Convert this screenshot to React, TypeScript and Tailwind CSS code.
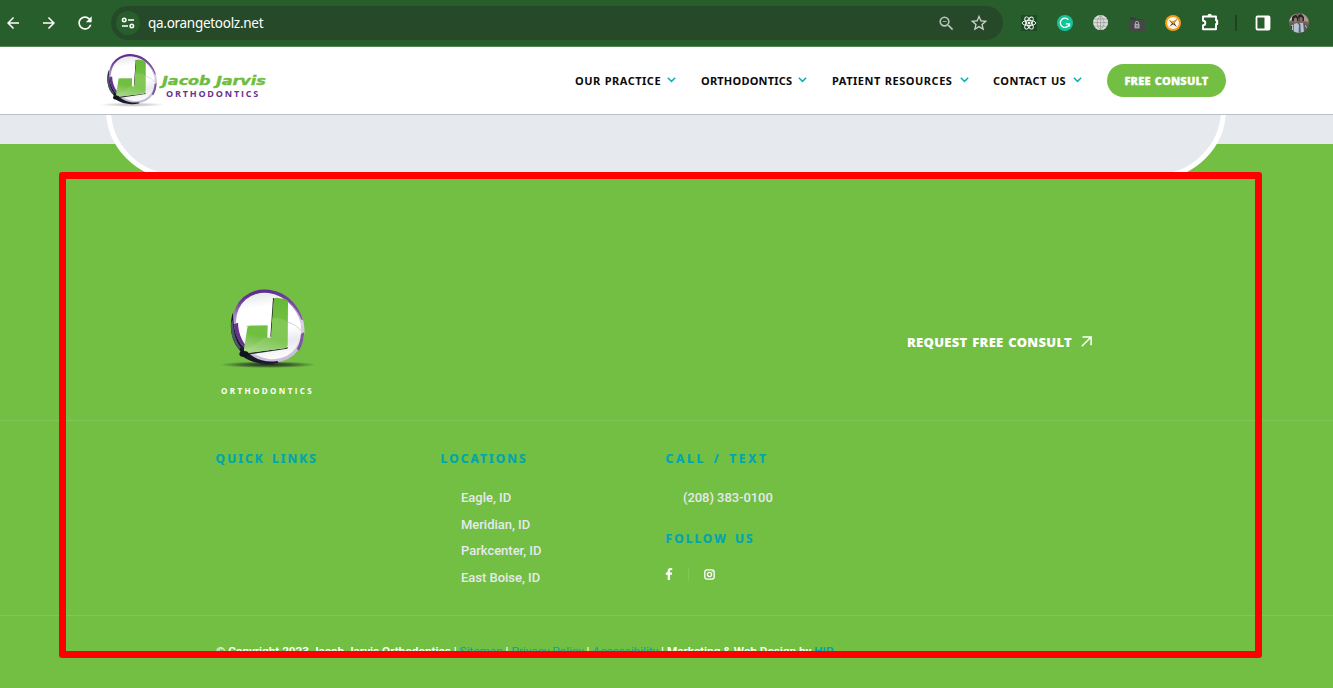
import React from "react";
import { MdArrowBack, MdArrowForward, MdRefresh, MdStarBorder, MdOutlineZoomOut } from "react-icons/md";
import { FaFacebookF } from "react-icons/fa";

function Emblem({ id, className, shadow }: { id: string; className: string; shadow: number }) {
  return (
    <svg viewBox="60 55 285 240" className={className}>
      <defs>
        <linearGradient id={`${id}-ring`} gradientUnits="userSpaceOnUse" x1="180" y1="60" x2="215" y2="282" gradientTransform="rotate(-49 206 169)">
          <stop offset="0" stopColor="#5c2a88" />
          <stop offset="0.12" stopColor="#6f3b9b" />
          <stop offset="0.3" stopColor="#a78ac2" />
          <stop offset="0.5" stopColor="#d9cfe4" />
          <stop offset="1" stopColor="#c9bad9" />
        </linearGradient>
        <linearGradient id={`${id}-face`} gradientUnits="userSpaceOnUse" x1="190" y1="70" x2="220" y2="272" gradientTransform="rotate(-49 206 169)">
          <stop offset="0" stopColor="#e9e9ec" />
          <stop offset="0.2" stopColor="#ffffff" />
          <stop offset="0.55" stopColor="#ffffff" />
          <stop offset="0.75" stopColor="#e9eaee" />
          <stop offset="1" stopColor="#ffffff" />
        </linearGradient>
        <linearGradient id={`${id}-j`} x1="0.6" y1="0" x2="0.4" y2="1">
          <stop offset="0" stopColor="#68b93a" />
          <stop offset="0.45" stopColor="#72c142" />
          <stop offset="0.7" stopColor="#6fbe3f" />
          <stop offset="1" stopColor="#9fd37f" />
        </linearGradient>
        <radialGradient id={`${id}-shadow`}>
          <stop offset="0" stopColor="#1c251c" stopOpacity="0.95" />
          <stop offset="0.5" stopColor="#1c251c" stopOpacity="0.6" />
          <stop offset="1" stopColor="#1c251c" stopOpacity="0" />
        </radialGradient>
      </defs>
      <ellipse cx="204" cy="285" rx="145" ry="10" fill={`url(#${id}-shadow)`} opacity={shadow} />
      <ellipse cx="206" cy="169" rx="115" ry="102" transform="rotate(49 206 169)" fill={`url(#${id}-ring)`} />
      <ellipse cx="206" cy="169" rx="105" ry="92" transform="rotate(49 206 169)" fill={`url(#${id}-face)`} />
      <path d="M99 128C86 166 93 214 118 240L130 262C158 280 194 288 236 279L232 274C196 280 165 268 146 250L134 236C110 212 100 180 99 128Z" fill="#171b29" />
      <path d="M93 160C91 190 99 220 117 238L123 234C107 212 100 190 99 150Z" fill="#4a5866" />
      <path d="M102 164L114 159C115 188 124 211 139 229L134 236C113 215 103 190 102 164Z" fill="#67328f" />
      <path d="M303 193L312 188C312 209 306 229 297 243L290 238C298 224 302 209 303 193Z" fill="#7d55a0" />
      <path d="M232 66C268 78 298 112 309 150L304 150C293 120 267 88 231 73Z" fill="#6b3c92" opacity="0.75" />
      <path d="M211 201L214 201L223 86L219 85Z" fill="#1d281e" />
      <path d="M140 170L203 168" stroke="#4d7f36" strokeWidth="1.5" />
      <path d="M134 250L254 236L264 232L262 237L150 254Z" fill="#26342a" />
      <path d="M221 91Q222 83 230 84L254 88Q264 90 264 99L263 225Q263 233 254 235L145 250Q130 250 132 237L142 174Q143 168 150 168L203 168L202 204L213 204Z" fill={`url(#${id}-j)`} />
      <path d="M217 146Q247 142 264 158L263 225Q263 233 254 235L145 250Q132 249 133 237Q165 229 192 204L214 204Z" fill="#b9e2a0" opacity="0.22" />
      <path d="M264 157Q291 166 308 188" stroke="#d4d0dc" strokeWidth="3" fill="none" />
      <ellipse cx="132" cy="253" rx="14" ry="9" fill="#10151d" />
    </svg>
  );
}

function Chevron() {
  return (
    <svg viewBox="0 0 9 6" className="mt-[-1px] h-[6px] w-[9px] shrink-0">
      <path d="M0.8 0.8L4.5 4.4L8.2 0.8" fill="none" stroke="#0cb0b8" strokeWidth="1.5" />
    </svg>
  );
}

function NavItem({ label, className }: { label: string; className: string }) {
  return (
    <a className={`flex shrink-0 items-center justify-between ${className}`}>
      <span className="whitespace-nowrap pt-[2px] font-['Noto_Sans',sans-serif] text-[11px] font-bold text-[#0b0b0b]">{label}</span>
      <Chevron />
    </a>
  );
}

function BrowserBar() {
  return (
    <div className="relative z-10 flex h-[47px] shrink-0 items-center border-b border-[#558558] bg-[#285e2b] text-white">
      <MdArrowBack className="ml-[4px] size-[18px]" />
      <MdArrowForward className="ml-[18px] size-[18px]" />
      <MdRefresh className="ml-[17px] size-[20px]" />
      <div className="ml-[16px] flex h-[34px] w-[892px] items-center rounded-full bg-[#264a29] pl-[5px]">
        <div className="flex size-[24px] items-center justify-center rounded-full bg-[#285e2b]">
          <svg viewBox="0 0 14 12" className="h-[12px] w-[14px]" fill="none" stroke="#fff" strokeWidth="1.6">
            <circle cx="3.2" cy="3" r="1.7" />
            <path d="M7 3H13M1 9H7" />
            <circle cx="10.8" cy="9" r="1.7" />
          </svg>
        </div>
        <span className="ml-[8px] font-['Noto_Sans',sans-serif] text-[13.5px] tracking-[-0.28px]">qa.orangetoolz.net</span>
        <MdOutlineZoomOut className="ml-auto size-[19px] text-[#b9c2b9]" />
        <MdStarBorder className="ml-[13px] mr-[14px] size-[20px] text-[#c9d0c9]" />
      </div>
      <svg viewBox="0 0 16 16" className="ml-[18px] size-[16px]" fill="none" stroke="#fff" strokeWidth="0.9">
        <rect width="16" height="16" fill="#1d4b25" stroke="none" />
        <ellipse cx="8" cy="8" rx="6.8" ry="2.6" />
        <ellipse cx="8" cy="8" rx="6.8" ry="2.6" transform="rotate(60 8 8)" />
        <ellipse cx="8" cy="8" rx="6.8" ry="2.6" transform="rotate(120 8 8)" />
        <circle cx="8" cy="8" r="1" fill="#fff" />
      </svg>
      <svg viewBox="0 0 16 16" className="ml-[20px] size-[16px]">
        <circle cx="8" cy="8" r="8" fill="#15c39a" />
        <path d="M11.4 4.8A4.6 4.6 0 1 0 12.4 8.8H8.8M12.5 8.6V11.4" fill="none" stroke="#fff" strokeWidth="1.3" />
      </svg>
      <svg viewBox="0 0 16 16" className="ml-[20px] size-[16px]">
        <circle cx="7.6" cy="7.6" r="7.5" fill="#dcdedc" />
        <path d="M7.6 .3V15M.3 7.6H15M1.4 4H13.8M1.4 11.2H13.8M7.6 .3C3.1 5 3.1 10.5 7.6 15M7.6 .3C12.1 5 12.1 10.5 7.6 15" fill="none" stroke="#8f968f" strokeWidth=".7" />
      </svg>
      <svg viewBox="0 0 16 16" className="ml-[20px] mt-[2px] size-[16px]">
        <path d="M1 1.5H6L7 3H15V8H1Z" fill="#343a36" />
        <rect y="3.5" width="16" height="11.5" rx="1" fill="#454747" />
        <path d="M6.4 8.2V7A1.6 1.6 0 0 1 9.6 7V8.2" fill="none" stroke="#a9abab" />
        <rect x="5.5" y="7.9" width="5" height="4.5" fill="#a9abab" />
        <path d="M8 9.2V11" stroke="#454747" />
      </svg>
      <svg viewBox="0 0 16 16" className="ml-[20px] size-[16px]">
        <circle cx="8" cy="8" r="8" fill="#f59c13" />
        <circle cx="8" cy="8" r="6" fill="#fff7e9" />
        <path d="M3.8 5.2L8 6.8L12.8 3.6L9.3 8L12 12.3L8.2 9.3L4.2 11.8L7 8.4Z" fill="#3c3121" />
        <path d="M3.8 5.2L8.6 6.6L12.8 3.4L8.4 9Z" fill="#f59c13" />
      </svg>
      <svg viewBox="0 0 18 18" className="ml-[20px] mt-[-2px] size-[18px]">
        <path d="M2 3.5H15V7.5H16.2V11H15V16.2H2V12.3A2.2 2.2 0 0 0 2 7.7Z" fill="none" stroke="#fff" strokeWidth="1.9" strokeLinejoin="round" />
        <path d="M6.5 3A2.2 2.2 0 0 1 10.9 3ZM15 7.2A2.2 2.2 0 0 1 15 11.6Z" fill="#fff" />
      </svg>
      <span className="ml-[16px] h-[16px] w-[2px] bg-[#1c4421]" />
      <svg viewBox="0 0 16 16" className="ml-[18px] size-[16px]">
        <rect x="1.5" y="1.5" width="13" height="13" rx="1" fill="none" stroke="#fff" strokeWidth="1.8" />
        <rect x="9.5" y="1" width="5.5" height="14" fill="#fff" />
      </svg>
      <svg viewBox="0 0 20 20" className="ml-[18px] size-[20px]">
        <defs><clipPath id="avatar"><circle cx="10" cy="10" r="10" /></clipPath></defs>
        <g clipPath="url(#avatar)">
          <rect width="20" height="20" fill="#706561" />
          <path d="M0 0H6L4 6L0 9Z" fill="#c7bec2" />
          <path d="M13 0L20 2V9L14 8Z" fill="#aa9791" />
          <path d="M3 4Q6 0 9 4V8H3ZM9 3Q12 -1 15 4V8H10Z" fill="#272426" />
          <ellipse cx="6.5" cy="7" rx="1.6" ry="2.4" fill="#9a7768" />
          <ellipse cx="12" cy="6.5" rx="1.7" ry="2.4" fill="#8d6a5c" />
          <path d="M4 18L5 11L8 10L10 12L11 20H5ZM11 20L11 10L14 10L15 19Z" fill="#b4c3d6" />
          <path d="M10 11H11.4L11.8 20H9.6Z" fill="#53617c" />
          <path d="M0 11L4 10L5 20H0ZM15 10L20 13V20H15Z" fill="#5b5650" />
          <path d="M2 13L3.5 12V17M16.5 12L17.5 15" stroke="#b8bdb0" />
        </g>
      </svg>
    </div>
  );
}

function SiteHeader() {
  return (
    <header className="relative z-10 flex h-[68px] shrink-0 border-b border-[#b9c0ca] bg-white pl-[100px]">
      <Emblem id="small" shadow={0.3} className="mt-[6px] h-[54px] w-[64px] shrink-0" />
      <div className="ml-[-2px] mt-[25px] w-[119px] shrink-0">
        <div className="w-[84px] origin-left scale-x-[1.24] whitespace-nowrap font-['DejaVu_Sans',sans-serif] text-[13px] font-bold italic leading-[17px] tracking-[-0.1px] text-[#6fbd3e] [-webkit-text-stroke:0.4px_#6fbd3e]">Jacob Jarvis</div>
        <div className="ml-[4px] whitespace-nowrap font-['Open_Sans',sans-serif] text-[9px] font-bold leading-[9px] tracking-[1.8px] text-[#67328f]">ORTHODONTICS</div>
      </div>
      <nav className="ml-[294px] flex h-[67px] items-center">
        <NavItem label="OUR PRACTICE" className="w-[101px] tracking-[0.5px] [word-spacing:0.6px]" />
        <NavItem label="ORTHODONTICS" className="ml-[25px] w-[106px] tracking-[0.2px]" />
        <NavItem label="PATIENT RESOURCES" className="ml-[25px] w-[137px] tracking-[0.52px] [word-spacing:0.6px]" />
        <NavItem label="CONTACT US" className="ml-[24px] w-[89px] tracking-[0.42px] [word-spacing:0.8px]" />
        <button className="ml-[25px] h-[33px] w-[119px] shrink-0 rounded-full bg-[#72bf44] pt-[1px] font-['Noto_Sans',sans-serif] text-[11px] font-black tracking-[0.22px] text-white [-webkit-text-stroke:0.3px_white] [word-spacing:1px]">FREE CONSULT</button>
      </nav>
    </header>
  );
}

function Heading({ children, className }: { children: React.ReactNode; className: string }) {
  return <h3 className={`ml-[-0.4px] whitespace-nowrap font-['Noto_Sans',sans-serif] text-[12px] font-bold leading-[20px] text-[#00a5ad] [-webkit-text-stroke:0.2px_#00a5ad] ${className}`}>{children}</h3>;
}

export default function App() {
  return (
    <div className="relative flex h-[688px] w-[1333px] flex-col overflow-hidden bg-[#72bf44] font-['Roboto',sans-serif]">
      <BrowserBar />
      <SiteHeader />
      <div className="h-[29px] shrink-0 bg-[#e6e9ee]" />
      <div className="absolute left-[106px] top-[20px] h-[159px] w-[1120px] rounded-b-[70px] border-[5px] border-white bg-[#e6e9ee]" />
      <footer className="flex flex-1 flex-col">
        <section className="flex h-[277px] shrink-0 border-b border-[#80c65b] pl-[220px]">
          <div className="w-[95px] shrink-0 pt-[144px]">
            <Emblem id="large" shadow={1} className="h-[80px] w-[95px]" />
            <div className="ml-[1px] mt-[18px] whitespace-nowrap font-['Open_Sans',sans-serif] text-[8px] font-bold leading-[10px] tracking-[2.4px] text-white">ORTHODONTICS</div>
          </div>
          <a className="ml-[592px] mt-[188px] flex h-[20px] items-center text-white">
            <span className="w-[174px] whitespace-nowrap pt-[2px] font-['Noto_Sans',sans-serif] text-[13px] font-black tracking-[0.3px] [word-spacing:1px]">REQUEST FREE CONSULT</span>
            <svg viewBox="0 0 11 11" className="mt-[-1px] size-[11px]" fill="none" stroke="#fff" strokeWidth="1.5">
              <path d="M.8 10.2L9.8 1.2M1.5 .9H10.1V9.2" />
            </svg>
          </a>
        </section>
        <section className="flex h-[195px] shrink-0 border-b border-[#80c65b] pl-[216px] pt-[28px]">
          <div className="w-[225px]"><Heading className="tracking-[2.05px] [word-spacing:2px]">QUICK LINKS</Heading></div>
          <div className="w-[225px]">
            <Heading className="tracking-[2.05px]">LOCATIONS</Heading>
            <ul className="mt-[16px] pl-[20px] text-[13px] font-medium leading-[26.7px] tracking-[-0.02px] text-[#e6e9ee]">
              <li>Eagle, ID</li><li>Meridian, ID</li><li>Parkcenter, ID</li><li>East Boise, ID</li>
            </ul>
          </div>
          <div className="w-[225px]">
            <Heading className="tracking-[2.7px] [word-spacing:2px]">CALL / TEXT</Heading>
            <div className="mb-[17px] mt-[15px] pl-[17px] text-[13px] font-medium leading-[28px] tracking-[-0.06px] text-[#e6e9ee]">(208) 383-0100</div>
            <Heading className="tracking-[2px] [word-spacing:2px]">FOLLOW US</Heading>
            <div className="mt-[17px] flex h-[16px] items-center text-white">
              <FaFacebookF className="ml-[-3px] size-[12px]" />
              <span className="ml-[13px] h-[12px] w-px bg-[#80c65b]" />
              <svg viewBox="0 0 11 11" className="ml-[14.5px] size-[11px]" fill="none" stroke="#fff" strokeWidth="1.3">
                <rect x=".8" y=".8" width="9.4" height="9.4" rx="2.4" />
                <circle cx="5.5" cy="5.5" r="2.1" />
                <circle cx="8.2" cy="2.8" r=".3" strokeWidth=".6" />
              </svg>
            </div>
          </div>
        </section>
        <p className="whitespace-nowrap pl-[216px] pt-[26px] text-[11.74px] font-semibold leading-[18px] text-white">
          © Copyright 2023 Jacob Jarvis Orthodontics | <a className="font-normal text-[#00a5ad]">Sitemap</a> | <a className="font-normal text-[#00a5ad]">Privacy Policy</a> | <a className="font-normal text-[#00a5ad]">Accessibility</a> | Marketing &amp; Web Design by <a className="font-bold text-[#00a5ad]">HIP</a>
        </p>
      </footer>
      <div className="absolute left-[59px] top-[172px] z-20 h-[486px] w-[1203px] rounded-[3px] border-[7px] border-[#ff0000]" />
    </div>
  );
}
